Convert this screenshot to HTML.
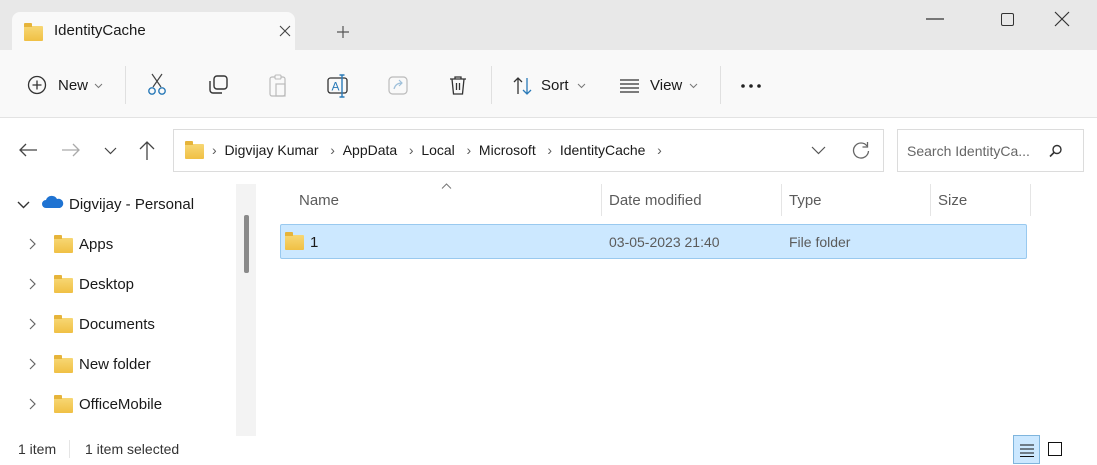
<!DOCTYPE html>
<html><head><meta charset="utf-8"><style>
*{margin:0;padding:0;box-sizing:border-box}
body{width:1097px;height:465px;overflow:hidden;background:#fff;font-family:"Liberation Sans",sans-serif;color:#1a1a1a;position:relative;font-size:15px}
.a{position:absolute;white-space:nowrap}
.fold{position:absolute;width:19px;height:15px;background:linear-gradient(#f7d774,#f0c044);border-radius:1px}
.fold:before{content:"";position:absolute;left:0;top:-3px;width:8px;height:4px;background:#e6b43a;border-radius:1px 1px 0 0}
.g{color:#5b5b5b}
svg{position:absolute;overflow:visible}
</style></head><body>
<div class="a" style="left:0;top:0;width:1097px;height:50px;background:#e8e8e8"></div>
<div class="a" style="left:12px;top:12px;width:283px;height:40px;background:#f9f9f9;border-radius:8px 8px 0 0"></div>
<div class="fold" style="left:24px;top:26px"></div>
<div class="a" style="left:54px;top:22px;font-size:15px">IdentityCache</div>
<svg style="left:280px;top:26px" width="10" height="10"><path d="M0 0l10 10M10 0L0 10" stroke="#444" stroke-width="1.1"/></svg>
<svg style="left:337px;top:26px" width="12" height="12"><path d="M6 0v12M0 6h12" stroke="#555" stroke-width="1.2"/></svg>
<svg style="left:926px;top:18px" width="18" height="2"><path d="M0 1h18" stroke="#333" stroke-width="1.2"/></svg>
<div class="a" style="left:1001px;top:13px;width:13px;height:13px;border:1.5px solid #333;border-radius:2px"></div>
<svg style="left:1055px;top:12px" width="14" height="14"><path d="M0 0l14 14M14 0L0 14" stroke="#333" stroke-width="1.2"/></svg>
<div class="a" style="left:0;top:50px;width:1097px;height:68px;background:#f9f9f9;border-bottom:1px solid #e3e3e3"></div>
<svg style="left:27px;top:75px" width="20" height="20"><circle cx="10" cy="10" r="8.5" fill="none" stroke="#333" stroke-width="1.3"/><path d="M10 5.5v9M5.5 10h9" stroke="#333" stroke-width="1.3"/></svg>
<div class="a" style="left:58px;top:77px">New</div>
<svg style="left:95px;top:84px" width="7" height="4"><path d="M0 0l3.5 3.5L7 0" stroke="#777" fill="none"/></svg>
<div class="a" style="left:125px;top:66px;width:1px;height:38px;background:#e0e0e0"></div>
<svg style="left:147px;top:73px" width="20" height="23"><path d="M5 1l9 13M15 1l-9 13" stroke="#444" stroke-width="1.2" fill="none"/><circle cx="5" cy="18" r="3.2" fill="none" stroke="#2a7ab8" stroke-width="1.4"/><circle cx="15" cy="18" r="3.2" fill="none" stroke="#2a7ab8" stroke-width="1.4"/></svg>
<svg style="left:207px;top:74px" width="22" height="22"><rect x="7" y="2" width="13" height="13" rx="3" fill="none" stroke="#333" stroke-width="1.4"/><path d="M3 7v9a3 3 0 0 0 3 3h9" stroke="#333" stroke-width="1.4" fill="none"/></svg>
<svg style="left:268px;top:74px" width="20" height="24"><rect x="2" y="3" width="15" height="19" rx="2" fill="none" stroke="#bbb" stroke-width="1.2"/><rect x="7" y="1" width="6" height="4" rx="1" fill="#f9f9f9" stroke="#bbb" stroke-width="1.1"/><rect x="8" y="10" width="9" height="12" fill="none" stroke="#bbb" stroke-width="1.2"/></svg>
<svg style="left:327px;top:74px" width="22" height="24"><rect x="1" y="4" width="19" height="15" rx="2.5" fill="none" stroke="#333" stroke-width="1.3"/><text x="4.5" y="16.5" font-size="12" fill="#2a7ab8" font-family="Liberation Sans">A</text><path d="M15 1v22M12.5 1h5M12.5 23h5" stroke="#2a7ab8" stroke-width="1.4"/></svg>
<svg style="left:388px;top:75px" width="20" height="20"><rect x="1" y="2" width="18" height="17" rx="3.5" fill="none" stroke="#bbb" stroke-width="1.2"/><path d="M6 14c1-4 4-6 8-6M11 5l3 3-3 3" stroke="#9fc0da" stroke-width="1.2" fill="none"/></svg>
<svg style="left:448px;top:74px" width="20" height="22"><path d="M2 5h16M7 5V3h6v2M4 5l1.5 15h9L16 5M8.5 9v7M11.5 9v7" stroke="#333" stroke-width="1.3" fill="none"/></svg>
<div class="a" style="left:491px;top:66px;width:1px;height:38px;background:#e0e0e0"></div>
<svg style="left:512px;top:76px" width="22" height="20"><path d="M6 18V2M2 6l4-4 4 4" stroke="#333" stroke-width="1.3" fill="none"/><path d="M15 2v16M11 14l4 4 4-4" stroke="#2a7ab8" stroke-width="1.3" fill="none"/></svg>
<div class="a" style="left:541px;top:77px">Sort</div>
<svg style="left:578px;top:84px" width="7" height="4"><path d="M0 0l3.5 3.5L7 0" stroke="#777" fill="none"/></svg>
<svg style="left:620px;top:79px" width="20" height="14"><path d="M0 1h19M0 5h19M0 9h19M0 13h19" stroke="#333" stroke-width="1.2"/></svg>
<div class="a" style="left:650px;top:77px">View</div>
<svg style="left:690px;top:84px" width="7" height="4"><path d="M0 0l3.5 3.5L7 0" stroke="#777" fill="none"/></svg>
<div class="a" style="left:720px;top:66px;width:1px;height:38px;background:#e0e0e0"></div>
<svg style="left:741px;top:84px" width="22" height="4"><circle cx="2" cy="2" r="1.8" fill="#222"/><circle cx="10" cy="2" r="1.8" fill="#222"/><circle cx="18" cy="2" r="1.8" fill="#222"/></svg>
<div class="a" style="left:0;top:119px;width:1097px;height:62px;background:#fff"></div>
<svg style="left:19px;top:143px" width="18" height="14"><path d="M18 7H1M7 1L1 7l6 6" stroke="#444" stroke-width="1.3" fill="none"/></svg>
<svg style="left:62px;top:143px" width="18" height="14"><path d="M0 7h17M11 1l6 6-6 6" stroke="#aaa" stroke-width="1.3" fill="none"/></svg>
<svg style="left:105px;top:148px" width="11" height="6"><path d="M0 0l5.5 5.5L11 0" stroke="#444" stroke-width="1.2" fill="none"/></svg>
<svg style="left:139px;top:141px" width="16" height="19"><path d="M8 19V1M1 8l7-7 7 7" stroke="#444" stroke-width="1.3" fill="none"/></svg>
<div class="a" style="left:173px;top:129px;width:711px;height:43px;border:1px solid #dcdcdc;background:#fff"></div>
<div class="fold" style="left:185px;top:144px"></div>
<div class="a" style="left:212px;top:142px;font-size:14px"><span class="g">›</span>&nbsp;&nbsp;Digvijay Kumar&nbsp;&nbsp;&nbsp;<span class="g">›</span>&nbsp;&nbsp;AppData&nbsp;&nbsp;&nbsp;<span class="g">›</span>&nbsp;&nbsp;Local&nbsp;&nbsp;&nbsp;<span class="g">›</span>&nbsp;&nbsp;Microsoft&nbsp;&nbsp;&nbsp;<span class="g">›</span>&nbsp;&nbsp;IdentityCache&nbsp;&nbsp;&nbsp;<span class="g">›</span></div>
<svg style="left:812px;top:147px" width="13" height="7"><path d="M0 0l6.5 6.5L13 0" stroke="#555" stroke-width="1.2" fill="none"/></svg>
<svg style="left:852px;top:141px" width="18" height="18"><path d="M15 5A7.5 7.5 0 1 0 16.5 10" stroke="#666" stroke-width="1.3" fill="none"/><path d="M15.5 1v5h-5" stroke="#666" stroke-width="1.3" fill="none"/></svg>
<div class="a" style="left:897px;top:129px;width:187px;height:43px;border:1px solid #dcdcdc;background:#fff"></div>
<div class="a" style="left:907px;top:143px;font-size:14px;color:#666">Search IdentityCa...</div>
<svg style="left:1049px;top:144px" width="14" height="14"><circle cx="8" cy="5.5" r="4" fill="none" stroke="#333" stroke-width="1.4"/><path d="M5 8.5L1 12.5" stroke="#333" stroke-width="1.6"/></svg>
<svg style="left:18px;top:202px" width="11" height="6"><path d="M0 0l5.5 5.5L11 0" stroke="#333" stroke-width="1.4" fill="none"/></svg>
<svg style="left:42px;top:195px" width="22" height="14"><path d="M4 13a4 4 0 0 1 0-8 6 6 0 0 1 11-1 4.5 4.5 0 0 1 3 9z" fill="#1f73d2"/></svg>
<div class="a" style="left:69px;top:196px">Digvijay - Personal</div>
<svg style="left:30px;top:239px" width="6" height="10"><path d="M0 0l5 5-5 5" stroke="#666" stroke-width="1.2" fill="none"/></svg>
<div class="fold" style="left:54px;top:238px"></div><div class="a" style="left:79px;top:236px">Apps</div>
<svg style="left:30px;top:279px" width="6" height="10"><path d="M0 0l5 5-5 5" stroke="#666" stroke-width="1.2" fill="none"/></svg>
<div class="fold" style="left:54px;top:278px"></div><div class="a" style="left:79px;top:276px">Desktop</div>
<svg style="left:30px;top:319px" width="6" height="10"><path d="M0 0l5 5-5 5" stroke="#666" stroke-width="1.2" fill="none"/></svg>
<div class="fold" style="left:54px;top:318px"></div><div class="a" style="left:79px;top:316px">Documents</div>
<svg style="left:30px;top:359px" width="6" height="10"><path d="M0 0l5 5-5 5" stroke="#666" stroke-width="1.2" fill="none"/></svg>
<div class="fold" style="left:54px;top:358px"></div><div class="a" style="left:79px;top:356px">New folder</div>
<svg style="left:30px;top:399px" width="6" height="10"><path d="M0 0l5 5-5 5" stroke="#666" stroke-width="1.2" fill="none"/></svg>
<div class="fold" style="left:54px;top:398px"></div><div class="a" style="left:79px;top:396px">OfficeMobile</div>
<div class="a" style="left:236px;top:184px;width:20px;height:252px;background:#f3f3f3"></div>
<div class="a" style="left:244px;top:215px;width:5px;height:58px;background:#8a8a8a;border-radius:2px"></div>
<svg style="left:442px;top:184px" width="9" height="5"><path d="M0 4.5L4.5 0 9 4.5" stroke="#777" fill="none"/></svg>
<div class="a g" style="left:299px;top:192px">Name</div>
<div class="a" style="left:601px;top:184px;width:1px;height:32px;background:#e5e5e5"></div>
<div class="a g" style="left:609px;top:192px">Date modified</div>
<div class="a" style="left:781px;top:184px;width:1px;height:32px;background:#e5e5e5"></div>
<div class="a g" style="left:789px;top:192px">Type</div>
<div class="a" style="left:930px;top:184px;width:1px;height:32px;background:#e5e5e5"></div>
<div class="a g" style="left:938px;top:192px">Size</div>
<div class="a" style="left:1030px;top:184px;width:1px;height:32px;background:#e5e5e5"></div>
<div class="a" style="left:280px;top:224px;width:747px;height:35px;background:#cce8ff;border:1px solid #99c9ef;border-radius:2px"></div>
<div class="fold" style="left:285px;top:235px"></div>
<div class="a" style="left:310px;top:234px">1</div>
<div class="a g" style="left:609px;top:234px;font-size:14px">03-05-2023 21:40</div>
<div class="a g" style="left:789px;top:234px;font-size:14px">File folder</div>
<div class="a" style="left:18px;top:441px;font-size:14px;color:#333">1 item</div>
<div class="a" style="left:69px;top:440px;width:1px;height:18px;background:#e5e5e5"></div>
<div class="a" style="left:85px;top:441px;font-size:14px;color:#333">1 item selected</div>
<div class="a" style="left:1013px;top:435px;width:27px;height:29px;background:#cce8ff;border:1px solid #7fb5dd"></div>
<svg style="left:1020px;top:444px" width="14" height="13"><path d="M0 1h14M0 5h14M0 9h14M0 12.5h14" stroke="#111" stroke-width="1.1"/></svg>
<div class="a" style="left:1048px;top:442px;width:14px;height:14px;border:1.3px solid #111"></div>
</body></html>
